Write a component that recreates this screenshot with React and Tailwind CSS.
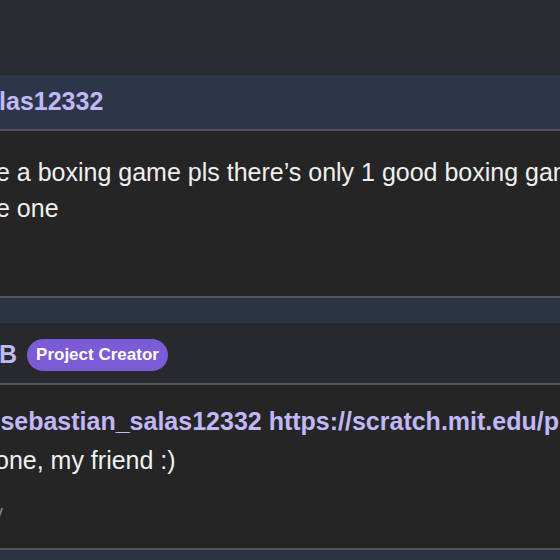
import React from 'react';

const FONT = "font-['Liberation_Sans','Arial',sans-serif]";

const Badge = ({ children }) => (
  <span className="ml-[10px] inline-flex h-[32px] items-center rounded-full bg-[#7c5bd7] px-[9px] text-[17px] font-bold text-white">
    {children}
  </span>
);

const App = () => {
  return (
    <div className={`h-[560px] w-[560px] overflow-hidden bg-[#292c31] ${FONT}`}>
      {/* end of the comment above */}
      <div className="h-[75px]" />

      {/* comment by sebastian_salas12332 */}
      <section>
        <div className="flex h-[56px] items-center border-b-2 border-[#51555b] bg-[#2d3548]">
          <span className="ml-[-158px] whitespace-nowrap text-[25px] font-bold text-[#c0b8f8]">
            sebastian_salas12332
          </span>
        </div>
        <div className="h-[165px] bg-[#252525] pt-[23px] text-[25px] leading-[36px] text-[#f0f0f0]">
          <div className="ml-[-4px] whitespace-nowrap">e a boxing game pls there’s only 1 good boxing game</div>
          <div className="ml-[-4px] whitespace-nowrap">e one</div>
        </div>
      </section>

      {/* reply by the project creator */}
      <section className="border-t-2 border-[#51555b]">
        <div className="h-[25px] bg-[#2b3445]" />
        <div className="flex h-[62px] items-center border-b-2 border-[#51555b] bg-[#28292c] pt-[4px]">
          <span className="ml-[-1px] text-[25px] font-bold text-[#c0b8f8]">B</span>
          <Badge>Project Creator</Badge>
        </div>
        <div className="h-[163px] bg-[#252525] pt-[17px] text-[25px] leading-[39px]">
          <div className="ml-[-24px] whitespace-nowrap font-bold text-[#c0b8f8]">
            @sebastian_salas12332 https://scratch.mit.edu/projects/
          </div>
          <div className="ml-[-5px] whitespace-nowrap text-[#f0f0f0]">one, my friend :)</div>
          <div className="ml-[-6px] mt-[20px] text-[18px] leading-[24px] text-[#8a8a8a]">v</div>
        </div>
        <div className="h-[13px] border-t-2 border-[#51555b] bg-[#2b3340]" />
      </section>
    </div>
  );
};

export default App;
